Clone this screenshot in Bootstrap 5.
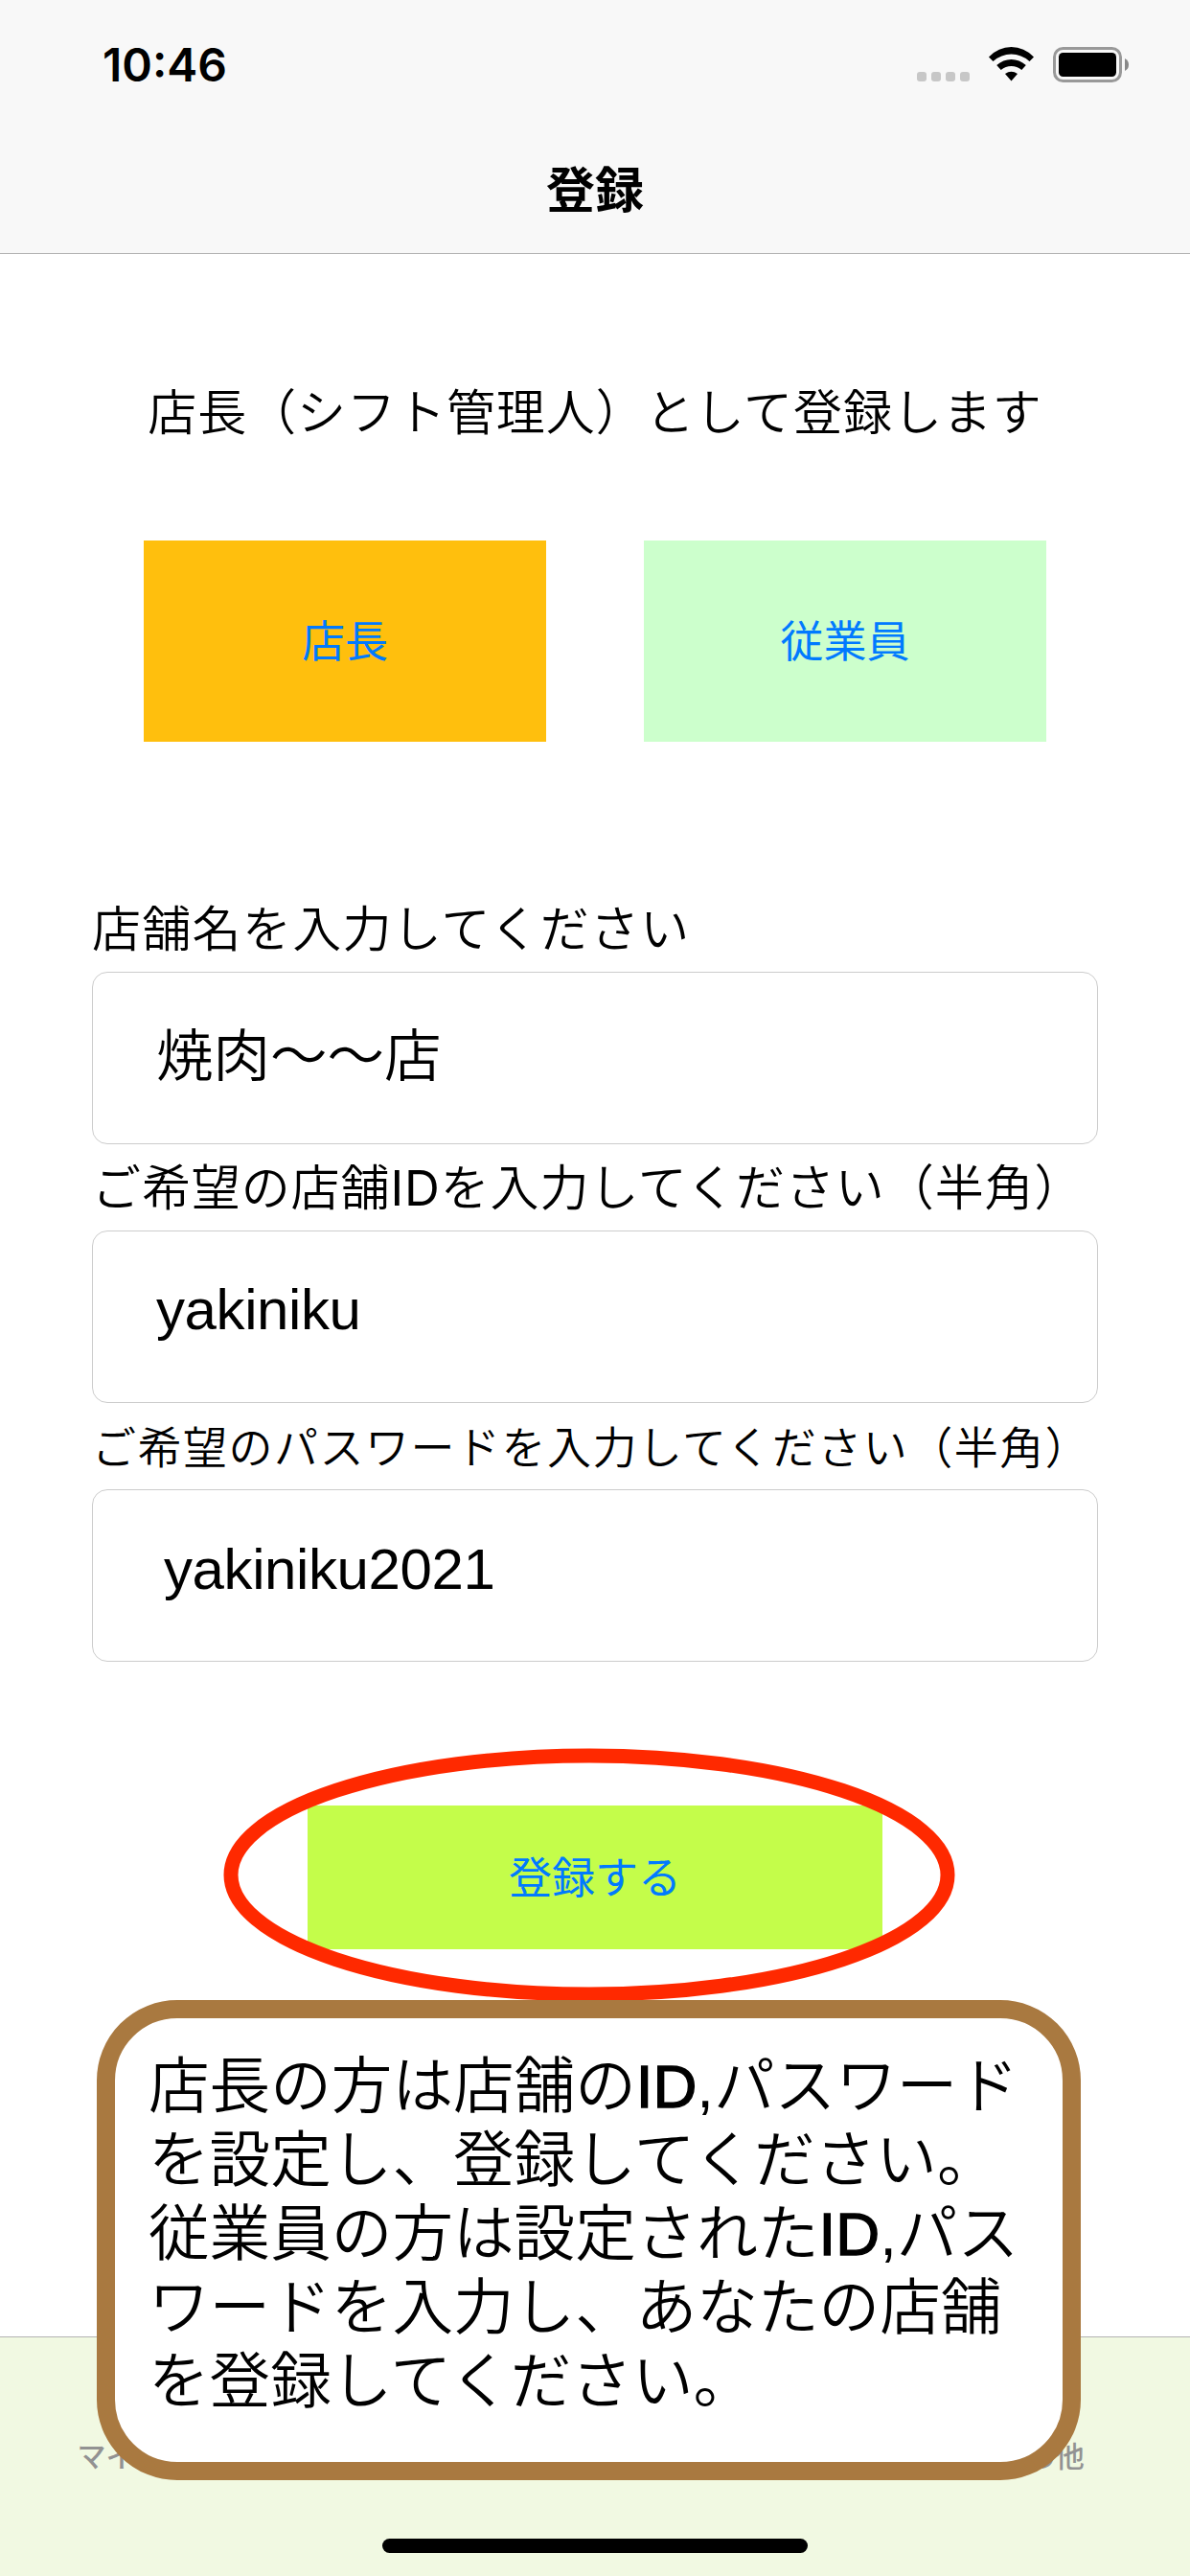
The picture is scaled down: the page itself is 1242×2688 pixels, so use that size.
<!DOCTYPE html>
<html lang="ja">
<head>
<meta charset="utf-8">
<meta name="viewport" content="width=device-width, initial-scale=1">
<title>登録</title>
<link href="https://cdn.jsdelivr.net/npm/bootstrap@5.3.0/dist/css/bootstrap.min.css" rel="stylesheet">
<style>
  body { font-family: Inter, "Noto Sans CJK JP", sans-serif; color: #000; background: #fff; text-spacing-trim: space-all; }
  .screen { width: 1242px; height: 2688px; }
  .top-area { height: 265px; background: #f8f8f8; border-bottom: 1px solid #b2b2b2; }
  .status-row { height: 132px; padding: 4px 63px 0 107px; }
  .clock { font-size: 48px; font-weight: 600; line-height: 1; }
  .screen-title { font-size: 51px; line-height: 134px; }
  .lead-line { margin-top: 128px; font-size: 51px; line-height: 76px; letter-spacing: .95px; font-weight: 350; }
  .role-row { margin-top: 95px; padding: 0 150px; gap: 102px; }
  .flat-btn { --bs-btn-border-radius: 0; --bs-btn-border-width: 0; --bs-btn-color: #007aff; --bs-btn-hover-color: #007aff; --bs-btn-font-size: 45px; --bs-btn-font-weight: 400; --bs-btn-line-height: 1; --bs-btn-padding-y: 0; }
  .role-btn { height: 210px; }
  .manager { background: #ffbf0d; }
  .staff { background: #ccffcc; }
  .fields { margin-top: 150px; padding: 0 96px; }
  .field-label { height: 90px; font-size: 51px; font-weight: 350; line-height: 92px; white-space: nowrap; letter-spacing: .9px; }
  .field-label.roomy { letter-spacing: 1.3px; }
  .field-label.compact { font-size: 46px; letter-spacing: 1.5px; }
  .field-box { height: 180px; border: 1px solid #ccc; border-radius: 16px; color: #000; font: 350 59.5px/1 "Liberation Sans", "Noto Sans CJK JP", sans-serif; padding: 0 66px 14px; }
  .field-box.latin { font-size: 60px; font-weight: 400; letter-spacing: -.4px; padding-bottom: 16px; }
  .field-box.indent { padding-left: 74px; padding-bottom: 14px; }
  .submit-wrap { width: 600px; height: 150px; margin-top: 150px; }
  .submit-btn { background: #c4fd4a; }
  .ring { left: -88px; top: -60px; pointer-events: none; }
  .tabs { height: 250px; border-top: 1px solid #b2b2b2; background: #f1f9e2; color: #929292; font-size: 30px; font-weight: 500; }
  .tabs .tab { padding-top: 102px; line-height: 44px; }
  .home-bar { left: 399px; bottom: 24px; width: 444px; height: 15px; border-radius: 8px; background: #000; }
  .note { left: 101px; top: 2087px; width: 1027px; height: 501px; border: 19px solid #a97940; border-radius: 84px; background: #fff; padding: 32px 0 0 35px; font: 350 63.6px/77px "Liberation Sans", "Noto Sans CJK JP", sans-serif; white-space: nowrap; }
  .note-latin { -webkit-text-stroke: 1.4px #000; }
</style>
<script src="https://cdn.jsdelivr.net/npm/bootstrap@5.3.0/dist/js/bootstrap.bundle.min.js"></script>
</head>
<body>
<div class="screen position-relative d-flex flex-column overflow-hidden">
  <header class="top-area flex-shrink-0">
    <div class="status-row d-flex align-items-center justify-content-between">
      <span class="clock">10:46</span>
      <svg width="222" height="38" viewBox="0 0 222 38" aria-hidden="true">
        <g fill="#c7c7c7"><rect y="26" width="10" height="10" rx="3"/><rect x="15" y="26" width="10" height="10" rx="3"/><rect x="30" y="26" width="10" height="10" rx="3"/><rect x="45" y="26" width="10" height="10" rx="3"/></g>
        <path d="M75 10.5Q85 0 98.500 0T122 10.500L117.500 15Q109 7.500 98.500 7.500T79.500 15ZM83.200 19Q90 13 98.500 13T113.800 19L109.300 24Q104.500 20 98.500 20T87.700 24ZM92 28Q98.500 23.500 105 28L98.500 35.500Z"/>
        <rect x="143.500" y="1.500" width="69" height="34" rx="9" fill="none" stroke="#999" stroke-width="3"/>
        <rect x="148" y="6" width="60" height="25" rx="4.500"/>
        <path d="M217 12Q221 14 221 18.500T217 25Z" fill="#888"/>
      </svg>
    </div>
    <h1 class="screen-title text-center fw-bold m-0">登録</h1>
  </header>

  <main class="flex-grow-1">
    <p class="lead-line text-center mb-0">店長（シフト管理人）として登録します</p>
    <div class="role-row d-flex">
      <button type="button" class="btn flat-btn role-btn manager flex-fill w-50">店長</button>
      <button type="button" class="btn flat-btn role-btn staff flex-fill w-50">従業員</button>
    </div>
    <form class="fields">
      <label class="field-label roomy d-block" for="shop">店舗名を入力してください</label>
      <input class="form-control field-box" id="shop" type="text" value="焼肉〜〜店">
      <label class="field-label d-block" for="shopId">ご希望の店舗<span class="fw-normal">ID</span>を入力してください（半角）</label>
      <input class="form-control field-box latin" id="shopId" type="text" value="yakiniku">
      <label class="field-label compact d-block" for="pass">ご希望のパスワードを入力してください（半角）</label>
      <input class="form-control field-box latin indent" id="pass" type="text" value="yakiniku2021">
      <div class="submit-wrap position-relative mx-auto">
        <button type="button" class="btn flat-btn submit-btn w-100 h-100">登録する</button>
        <svg class="ring position-absolute" width="764" height="265" viewBox="0 0 764 265" aria-hidden="true"><ellipse cx="382" cy="132.500" rx="374" ry="124.500" fill="none" stroke="#ff2900" stroke-width="15"/></svg>
      </div>
    </form>
  </main>

  <nav class="tabs d-flex flex-shrink-0 text-center">
    <span class="tab col-3">マイページ</span>
    <span class="tab col-3"></span>
    <span class="tab col-3"></span>
    <span class="tab col-3">その他</span>
  </nav>
  <div class="home-bar position-absolute"></div>

  <aside class="note position-absolute">店長の方は店舗の<span class="note-latin">ID</span>,パスワード<br>を設定し、登録してください。<br>従業員の方は設定された<span class="note-latin">ID</span>,パス<br>ワードを入力し、あなたの店舗<br>を登録してください。</aside>
</div>
</body>
</html>
